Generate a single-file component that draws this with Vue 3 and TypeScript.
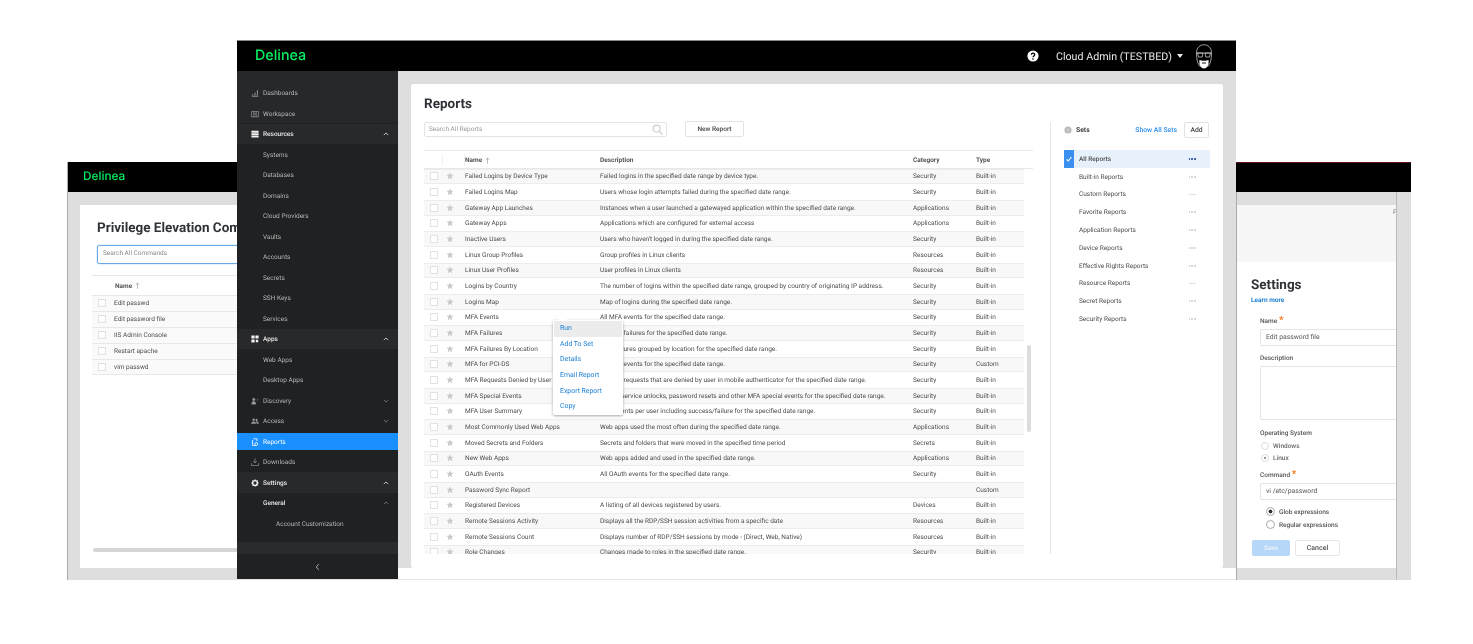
<script setup lang="ts">
interface Report { n: string; d: string; c: string; t: string }
const b = 'Built-in'
const reports: Report[] = [
  { n: 'Failed Logins by Device Type', d: 'Failed logins in the specified date range by device type.', c: 'Security', t: b },
  { n: 'Failed Logins Map', d: 'Users whose login attempts failed during the specified date range.', c: 'Security', t: b },
  { n: 'Gateway App Launches', d: 'Instances when a user launched a gatewayed application within the specified date range.', c: 'Applications', t: b },
  { n: 'Gateway Apps', d: 'Applications which are configured for external access', c: 'Applications', t: b },
  { n: 'Inactive Users', d: "Users who haven't logged in during the specified date range.", c: 'Security', t: b },
  { n: 'Linux Group Profiles', d: 'Group profiles in Linux clients', c: 'Resources', t: b },
  { n: 'Linux User Profiles', d: 'User profiles in Linux clients', c: 'Resources', t: b },
  { n: 'Logins by Country', d: 'The number of logins within the specified date range, grouped by country of originating IP address.', c: 'Security', t: b },
  { n: 'Logins Map', d: 'Map of logins during the specified date range.', c: 'Security', t: b },
  { n: 'MFA Events', d: 'All MFA events for the specified date range.', c: 'Security', t: b },
  { n: 'MFA Failures', d: 'All MFA failures for the specified date range.', c: 'Security', t: b },
  { n: 'MFA Failures By Location', d: 'MFA failures grouped by location for the specified date range.', c: 'Security', t: b },
  { n: 'MFA for PCI-DS', d: 'All MFA events for the specified date range.', c: 'Security', t: 'Custom' },
  { n: 'MFA Requests Denied by User', d: 'All MFA requests that are denied by user in mobile authenticator for the specified date range.', c: 'Security', t: b },
  { n: 'MFA Special Events', d: 'All self service unlocks, password resets and other MFA special events for the specified date range.', c: 'Security', t: b },
  { n: 'MFA User Summary', d: 'MFA events per user including success/failure for the specified date range.', c: 'Security', t: b },
  { n: 'Most Commonly Used Web Apps', d: 'Web apps used the most often during the specified date range.', c: 'Applications', t: b },
  { n: 'Moved Secrets and Folders', d: 'Secrets and folders that were moved in the specified time period', c: 'Secrets', t: b },
  { n: 'New Web Apps', d: 'Web apps added and used in the specified date range.', c: 'Applications', t: b },
  { n: 'OAuth Events', d: 'All OAuth events for the specified date range.', c: 'Security', t: b },
  { n: 'Password Sync Report', d: '', c: '', t: 'Custom' },
  { n: 'Registered Devices', d: 'A listing of all devices registered by users.', c: 'Devices', t: b },
  { n: 'Remote Sessions Activity', d: 'Displays all the RDP/SSH session activities from a specific date', c: 'Resources', t: b },
  { n: 'Remote Sessions Count', d: 'Displays number of RDP/SSH sessions by mode - (Direct, Web, Native)', c: 'Resources', t: b },
  { n: 'Role Changes', d: 'Changes made to roles in the specified date range.', c: 'Security', t: b },
]
interface NavItem { label: string; kind: 'top' | 'open' | 'sub' | 'group' | 'leaf' | 'active'; icon?: string; chev?: 'up' | 'down' }
const nav: NavItem[] = [
  { label: 'Dashboards', kind: 'top', icon: 'bars' },
  { label: 'Workspace', kind: 'top', icon: 'work' },
  { label: 'Resources', kind: 'open', icon: 'res', chev: 'up' },
  { label: 'Systems', kind: 'sub' }, { label: 'Databases', kind: 'sub' }, { label: 'Domains', kind: 'sub' },
  { label: 'Cloud Providers', kind: 'sub' }, { label: 'Vaults', kind: 'sub' }, { label: 'Accounts', kind: 'sub' },
  { label: 'Secrets', kind: 'sub' }, { label: 'SSH Keys', kind: 'sub' }, { label: 'Services', kind: 'sub' },
  { label: 'Apps', kind: 'open', icon: 'apps', chev: 'up' },
  { label: 'Web Apps', kind: 'sub' }, { label: 'Desktop Apps', kind: 'sub' },
  { label: 'Discovery', kind: 'top', icon: 'disc', chev: 'down' },
  { label: 'Access', kind: 'top', icon: 'access', chev: 'down' },
  { label: 'Reports', kind: 'active', icon: 'rep' },
  { label: 'Downloads', kind: 'top', icon: 'down' },
  { label: 'Settings', kind: 'open', icon: 'gear', chev: 'up' },
  { label: 'General', kind: 'group', chev: 'up' },
  { label: 'Account Customization', kind: 'leaf' },
]
const sets = ['All Reports', 'Built-in Reports', 'Custom Reports', 'Favorite Reports', 'Application Reports', 'Device Reports', 'Effective Rights Reports', 'Resource Reports', 'Secret Reports', 'Security Reports']
const menu = ['Run', 'Add To Set', 'Details', 'Email Report', 'Export Report', 'Copy']
const commands = ['Edit passwd', 'Edit password file', 'IIS Admin Console', 'Restart apache', 'vim passwd']
</script>

<template>
  <div class="desk">
    <!-- back window, left part -->
    <section class="win back">
      <header class="bar backbar"><span class="logo small">Delinea</span><i class="redline"></i></header>
      <div class="backbody">
        <div class="backcard">
          <h1 class="title">Privilege Elevation Commands</h1>
          <div class="cmdsearch">Search All Commands</div>
          <div class="cmdtable">
            <div class="cmdhead"><span class="headcell">Name</span><svg class="arrow" viewBox="0 0 6 8"><path d="M3 8V1M1 3l2-2 2 2" fill="none" stroke="#999" stroke-width=".8" /></svg></div>
            <div v-for="c in commands" :key="c" class="cmdrow"><i class="check"></i><span>{{ c }}</span></div>
          </div>
          <div class="hscroll"></div>
        </div>
      </div>
    </section>

    <!-- back window, right part -->
    <section class="win settings">
      <div class="setgray"></div>
      <div class="setlight"><span class="clip">Pr</span></div>
      <div class="setform">
        <h1 class="title settitle">Settings</h1>
        <a class="learn">Learn more</a>
        <div class="fields">
          <label class="lab">Name <b class="req">*</b></label>
          <div class="inp">Edit password file</div>
          <label class="lab">Description</label>
          <div class="inp area"></div>
          <label class="lab os">Operating System</label>
          <div class="radio"><i class="dot"></i>Windows</div>
          <div class="radio"><i class="dot on-soft"></i>Linux</div>
          <label class="lab cmd">Command <b class="req">*</b></label>
          <div class="inp">vi /etc/password</div>
          <div class="radio big first"><i class="dot lg on"></i>Glob expressions</div>
          <div class="radio big"><i class="dot lg"></i>Regular expressions</div>
        </div>
        <div class="btns"><span class="save">Save</span><span class="cancel">Cancel</span></div>
      </div>
    </section>
    <div class="rightstrip"></div>

    <!-- front window -->
    <section class="win front">
      <header class="bar frontbar">
        <span class="logo">Delinea</span>
        <div class="user">
          <svg class="help" viewBox="0 0 12 12"><circle cx="6" cy="6" r="5.6" fill="#fff" /><path d="M4.4 4.7c0-2.1 3.3-2.1 3.3-.1 0 1.300-1.700 1.300-1.700 2.700" fill="none" stroke="#000" stroke-width="1.300" /><circle cx="6" cy="9" r=".8" /></svg>
          <span class="uname">Cloud Admin (TESTBED)</span>
          <i class="caret"></i>
          <svg class="avatar" viewBox="0 0 18 26"><path d="M1.500 10C1.500-1 16.500-1 16.500 10c0 5-.5 9-3 13H4.500c-2.500-4-3-8-3-13z" fill="none" stroke="#ddd" stroke-width=".7" /><path d="M1.500 10h15" stroke="#ddd" stroke-width=".7" /><path d="M2.500 10h5.500l-.8 4H3.500zM10 10h5.500l-1 4h-3.700z" fill="none" stroke="#ddd" stroke-width=".7" /><path d="M4.500 17c2 1 7 1 9 0 .5 4-.5 8-4.500 8.500-4-.5-5-4.500-4.500-8.500z" fill="#fff" /><path d="M7 20h4" stroke="#000" stroke-width=".9" /></svg>
        </div>
      </header>
      <div class="frontbody">
        <aside class="side">
          <nav class="navlist">
            <div v-for="it in nav" :key="it.label" class="nav" :class="it.kind">
              <span v-if="it.icon" class="nicon">
                <svg viewBox="0 0 10 10">
                  <path v-if="it.icon === 'bars'" d="M1 9h8M2 8V6.500M5 8V4.500M8 8V1.500" stroke="currentColor" stroke-width="1.200" fill="none" />
                  <path v-else-if="it.icon === 'work'" d="M.5 2h9v6.500h-9zM3.500 2v6.500M6.500 2v6.500M3.500 5h3" stroke="currentColor" stroke-width=".9" fill="none" />
                  <path v-else-if="it.icon === 'res'" d="M.5 1h9v2.300h-9zM.5 4h9v2.300h-9zM.5 7h9v2.300h-9z" fill="currentColor" />
                  <path v-else-if="it.icon === 'apps'" d="M.5.5h4v4h-4zM5.500.5h4v4h-4zM.5 5.500h4v4h-4zM6 6h3v3H6z" fill="currentColor" />
                  <path v-else-if="it.icon === 'disc'" d="M3.500 1.500a1.600 1.600 0 1 1 0 3.200 1.600 1.600 0 0 1 0-3.200zM.8 9c0-2.800 1.200-3.500 2.700-3.500S6 6.400 6 9zM7 3h2.500M7 5h2" fill="currentColor" stroke="currentColor" stroke-width=".5" />
                  <path v-else-if="it.icon === 'access'" d="M3.300 2a1.500 1.500 0 1 1 0 3 1.500 1.500 0 0 1 0-3zM7 2.300a1.300 1.300 0 1 1 0 2.600 1.300 1.300 0 0 1 0-2.600zM.3 8.500c0-2 1.300-3 3-3s3 1 3 3zM7 8.500c0-1.200-.2-2-1-3 2-.4 3.700.6 3.700 3z" fill="currentColor" />
                  <path v-else-if="it.icon === 'rep'" d="M3 1h4.500v3M2 2.500v7h4M6.500 5.800a1.800 1.800 0 1 1 0 3.600 1.800 1.800 0 0 1 0-3.600z" stroke="currentColor" stroke-width="1" fill="none" />
                  <path v-else-if="it.icon === 'down'" d="M5 .5v5.500M2.800 4l2.200 2.200L7.200 4M.7 6.500v3h8.600v-3" stroke="currentColor" stroke-width=".9" fill="none" />
                  <g v-else-if="it.icon === 'gear'"><circle cx="5" cy="5" r="3" fill="none" stroke="currentColor" stroke-width="1.800" /><path d="M5 .3v2M5 7.700v2M.3 5h2M7.700 5h2M1.700 1.700l1.400 1.400M6.900 6.900l1.400 1.400M1.700 8.300l1.400-1.400M6.900 3.100l1.400-1.400" stroke="currentColor" stroke-width="1.100" /></g>
                </svg>
              </span>
              <span class="nlabel">{{ it.label }}</span>
              <svg v-if="it.chev" class="chev" viewBox="0 0 8 5"><path :d="it.chev === 'up' ? 'M1 4l3-3 3 3' : 'M1 1l3 3 3-3'" fill="none" stroke="currentColor" stroke-width="1" /></svg>
            </div>
            <div class="sidestrip"></div>
          </nav>
          <div class="collapse"><svg viewBox="0 0 6 10"><path d="M4.500 1.500L1.500 5l3 3.500" fill="none" stroke="#ccc" stroke-width="1" /></svg></div>
        </aside>
        <div class="mainwrap">
          <main class="card">
            <div class="left">
              <h1 class="title">Reports</h1>
              <div class="tools">
                <div class="search"><span>Search All Reports</span><svg viewBox="0 0 12 12"><circle cx="5" cy="5" r="3.800" fill="none" stroke="#ccc" stroke-width="1.200" /><path d="M8 8l3.500 3.500" stroke="#ccc" stroke-width="1.400" /></svg></div>
                <span class="newbtn">New Report</span>
              </div>
              <div class="table">
                <div class="thead">
                  <span class="cchk sep"></span><span class="cstar sep"></span>
                  <span class="cname hname">Name<svg class="arrow" viewBox="0 0 6 8"><path d="M3 8V1M1 3l2-2 2 2" fill="none" stroke="#999" stroke-width=".8" /></svg></span>
                  <span class="cdesc hname">Description</span><span class="ccat hname">Category</span><span class="ctype hname">Type</span>
                </div>
                <div class="tbody">
                  <div v-for="r in reports" :key="r.n" class="row">
                    <span class="cchk"><i class="check"></i></span>
                    <span class="cstar"><svg viewBox="0 0 10 10"><path d="M5 .5l1.350 3h3.150L7 5.700l.85 3.500L5 7.300 2.150 9.200 3 5.700.5 3.500h3.150z" fill="#c9c9c9" /></svg></span>
                    <span class="cname">{{ r.n }}</span><span class="cdesc">{{ r.d }}</span><span class="ccat">{{ r.c }}</span><span class="ctype">{{ r.t }}</span>
                  </div>
                </div>
                <div class="vscroll"></div>
                <div class="popup">
                  <i class="tip"></i>
                  <div v-for="(m, i) in menu" :key="m" class="pitem" :class="{ hot: i === 0 }">{{ m }}</div>
                </div>
              </div>
            </div>
            <div class="right">
              <div class="sethead">
                <svg class="setback" viewBox="0 0 10 10"><circle cx="5" cy="5" r="4.500" fill="#bbb" /><path d="M4 3l2 2-2 2" fill="none" stroke="#eee" stroke-width=".9" /></svg>
                <span class="setname">Sets</span>
                <a class="showall">Show All Sets</a>
                <span class="addbtn">Add</span>
              </div>
              <div class="setlist">
                <div v-for="(s, i) in sets" :key="s" class="setitem" :class="{ sel: i === 0 }">
                  <span class="flag"><svg v-if="i === 0" viewBox="0 0 10 10"><path d="M2 5.500l2 2 4-5" fill="none" stroke="#fff" stroke-width="1.400" /></svg></span>
                  <span class="setlabel">{{ s }}</span>
                  <span class="dots"><i></i><i></i><i></i></span>
                </div>
              </div>
            </div>
          </main>
        </div>
      </div>
    </section>
  </div>
</template>

<style scoped>
.desk { position: relative; width: 1473px; height: 644px; overflow: hidden; background: #fff; font-family: Roboto, "Liberation Sans", sans-serif; font-size: 6.5px; color: #4c4c4c; filter: blur(0.3px); text-rendering: geometricPrecision; }
.win { position: absolute; }
.bar { background: #000; display: flex; align-items: center; }
.logo { color: #06f060; font-family: Inter, Roboto, sans-serif; font-size: 14.300px; font-weight: 500; position: relative; top: -1px; }
.logo.small { font-size: 11.800px; margin-left: 15px; }
.title { margin: 0; font-size: 13.500px; font-weight: 700; color: #2f3338; line-height: 16px; white-space: nowrap; }
.check { display: block; width: 8px; height: 8px; border: 1px solid #e2e2e2; background: #fff; box-sizing: border-box; }

.back { left: 67px; top: 162px; width: 1344px; height: 418px; border-left: 1px solid #aaa; box-sizing: border-box; }
.backbar { height: 30px; position: relative; }
.redline { position: absolute; right: 0; top: 0; width: 175px; height: 1px; background: #5c1518; }
.backbody { height: 388px; background: #dedede; padding: 13px 0 12px 12px; box-sizing: border-box; }
.backcard { position: relative; width: 400px; height: 363px; background: #fff; padding: 15px 17px 14px; box-sizing: border-box; }
.cmdsearch { margin-top: 9px; height: 17px; border: 1px solid #6aaae6; box-shadow: 0 0 2px #a8cff2; border-radius: 2px; padding-left: 5px; line-height: 15px; color: #888; }
.cmdtable { margin: 11px 0 0 -5px; border-top: 1px solid #e8e8e8; }
.cmdhead { display: flex; align-items: center; height: 19px; padding-left: 23px; border-bottom: 1px solid #e8e8e8; gap: 3px; }
.headcell { font-weight: 700; color: #555; }
.arrow { width: 5px; height: 7px; }
.cmdrow { display: flex; align-items: center; height: 15.900px; box-sizing: border-box; border-bottom: 1px solid #e8e8e8; padding-left: 6px; gap: 8px; background: #fafafa; }
.hscroll { position: absolute; left: 13px; top: 343px; width: 200px; height: 4px; border-radius: 2px; background: #d6d6d6; }

.settings { left: 1236px; top: 192px; width: 161px; height: 388px; background: #fff; overflow: hidden; border-left: 1px solid #aaa; box-sizing: border-box; }
.setgray { height: 13px; background: #dedede; }
.setlight { height: 57px; background: #f7f7f7; position: relative; }
.clip { position: absolute; left: 156px; top: 3px; color: #777; }
.setform { padding: 14.500px 0 0 14px; }
.settitle { line-height: 16px; }
.learn { display: block; color: #1a7fd4; font-weight: 700; font-size: 6.500px; margin-top: 3.500px; line-height: 8px; }
.fields { margin: 13px 0 0 9px; }
.lab { display: block; line-height: 8px; color: #555; font-weight: 500; font-size: 6.500px; }
.req { color: #f47a20; font-size: 10px; line-height: 8px; }
.inp { width: 200px; height: 17px; box-sizing: border-box; border: 1px solid #e4e4e4; border-radius: 2px; margin: 4px 0 8px; padding-left: 5px; line-height: 15px; color: #555; font-size: 6.800px; }
.area { height: 54px; margin-bottom: 9px; }
.os { margin-bottom: 3px; }
.radio { display: flex; align-items: center; gap: 4px; height: 12px; padding-left: 1px; font-weight: 500; color: #666; }
.dot { display: block; width: 8px; height: 8px; border: 1px solid #ddd; border-radius: 50%; box-sizing: border-box; background: #fff; }
.on-soft { background: radial-gradient(circle, #999 0 1.200px, #fff 1.500px); }
.cmd { margin-top: 7px; }
.radio.big { padding-left: 6px; height: 13px; color: #555; }
.radio.first { margin-top: -3px; }
.dot.lg { width: 9px; height: 9px; border-color: #aaa; }
.dot.on { background: radial-gradient(circle, #333 0 1.800px, #fff 2.200px); }
.btns { display: flex; gap: 5px; margin-top: 9px; margin-left: 1px; }
.save { width: 38px; height: 16px; background: #b7d7f8; border-radius: 2px; color: #e8f2fc; font-weight: 700; text-align: center; line-height: 16px; }
.cancel { width: 45px; height: 16px; border: 1px solid #e6e6e6; border-radius: 2px; box-sizing: border-box; text-align: center; line-height: 14px; color: #555; font-weight: 500; font-size: 7px; }
.settings::after { content: ""; position: absolute; left: 0; right: 0; bottom: 0; height: 12px; background: #dedede; }
.settings::before { content: ""; position: absolute; top: 0; bottom: 0; right: 0; width: 1px; background: #bbb; z-index: 2; }
.rightstrip { position: absolute; left: 1397px; top: 192px; width: 14px; height: 388px; background: #dedede; }

.front { left: 237px; top: 40px; width: 999px; height: 540px; border-top: 1px solid #888; box-sizing: border-box; }
.frontbar { height: 30px; padding-left: 18px; justify-content: space-between; }
.user { display: flex; align-items: center; }
.help { width: 12px; height: 12px; margin-right: 17px; }
.uname { color: #e8e8e8; font-size: 10.700px; }
.caret { width: 0; height: 0; border: 3.500px solid transparent; border-top: 4px solid #e8e8e8; border-bottom: 0; margin-left: 5px; }
.avatar { width: 18px; height: 26px; margin: 0 23px 0 12px; }
.frontbody { display: flex; height: 509px; background: #fff; border-bottom: 1px solid #e4e4e4; box-sizing: border-box; }
.side { width: 161px; background: #1f2122; display: flex; flex-direction: column; flex-shrink: 0; }
.navlist { position: relative; height: 483px; overflow: hidden; padding-top: 11.750px; box-sizing: border-box; flex-shrink: 0; background: linear-gradient(#26282a 0 52px, #1f2122 52px); }
.nav { display: flex; align-items: center; height: 20.500px; box-sizing: border-box; padding-left: 14px; color: #b5b5b5; }
.nicon { width: 8px; height: 8px; margin-right: 4px; flex-shrink: 0; color: #9a9a9a; display: block; }
.nicon svg { display: block; width: 8px; height: 8px; }
.nlabel { flex: 1; }
.chev { width: 6px; height: 4px; margin-right: 9px; color: #888; }
.open { background: #28292b; color: #e6e6e6; font-weight: 500; }
.open .nicon, .open .chev { color: #f2f2f2; }
.sub .nlabel { padding-left: 12px; }
.group .nlabel { padding-left: 12px; color: #e6e6e6; font-weight: 500; }
.leaf .nlabel { padding-left: 25px; }
.active { background: #1a90ff; background-clip: padding-box; border-block: 2px solid transparent; color: #fff; }
.active .nicon { color: #fff; }
.sidestrip { position: absolute; left: 0; right: 0; top: 471px; height: 12px; background: #292b2d; }
.collapse { flex: 1; display: flex; align-items: center; justify-content: center; }
.collapse svg { width: 5px; height: 8px; margin-left: -1px; }
.mainwrap { flex: 1; min-width: 0; height: 497px; background: #dedede; padding: 13px 13px 0; box-sizing: border-box; }
.card { background: #fff; height: 484px; display: flex; overflow: hidden; box-sizing: border-box; padding: 12px 0 0 13px; border-radius: 2px; }
.left { width: 609px; flex-shrink: 0; }
.tools { display: flex; align-items: center; margin-top: 9px; gap: 18px; height: 16px; }
.search { width: 243px; height: 15px; box-sizing: border-box; border: 1px solid #e4e4e4; border-radius: 2px; padding: 0 3px 0 4px; color: #999; display: flex; align-items: center; justify-content: space-between; }
.search svg { width: 11px; height: 11px; }
.newbtn { width: 59px; height: 16px; box-sizing: border-box; border: 1px solid #e2e2e2; border-radius: 2px; text-align: center; line-height: 14px; color: #444; font-weight: 500; }
.table { position: relative; margin-top: 13px; }
.thead { display: flex; align-items: center; height: 18.500px; padding-top: 1.500px; box-sizing: border-box; border-top: 1px solid #e8e8e8; border-bottom: 1px solid #e8e8e8; }
.hname { font-weight: 700; color: #555; display: flex; gap: 3px; align-items: center; }
.sep { height: 12px; border-right: 1px solid #f0f0f0; box-sizing: border-box; }
.tbody { height: 385.500px; overflow: hidden; }
.row { display: flex; align-items: center; height: 15.680px; width: 600px; box-sizing: border-box; white-space: nowrap; }
.row:nth-child(odd) { background: #f8f8f8; box-shadow: inset 0 -1px #ececec, inset 0 1px #ececec; }
.cchk { width: 19px; padding-left: 6px; box-sizing: border-box; flex-shrink: 0; }
.cstar { width: 22px; padding-left: 3px; box-sizing: border-box; flex-shrink: 0; display: block; }
.cstar svg { display: block; width: 8px; height: 8px; }
.row .cstar { height: 8px; }
.cname { width: 135px; flex-shrink: 0; padding-left: 0; }
.cdesc { width: 313px; flex-shrink: 0; }
.ccat { width: 63px; flex-shrink: 0; }
.ctype { width: 48px; flex-shrink: 0; }
.vscroll { position: absolute; left: 603px; top: 195px; width: 4px; height: 87px; background: #dcdcdc; border-radius: 2px; }
.popup { position: absolute; left: 129px; top: 170px; width: 70px; height: 95px; background: #fff; box-shadow: 0 1px 3px rgba(0,0,0,.35); border-radius: 2px; padding-top: 1px; box-sizing: border-box; }
.tip { position: absolute; left: 7px; top: -3px; width: 6px; height: 6px; background: #fff; transform: rotate(45deg); }
.pitem { position: relative; height: 15.680px; line-height: 15.680px; padding-left: 6px; margin: 0 1px; color: #1a7fd4; font-size: 6.900px; }
.hot { background: #ececec; }
.right { margin-left: 17px; width: 159px; border-left: 1px solid #e6e6e6; height: 432px; margin-top: 26px; box-sizing: border-box; padding-left: 13px; }
.sethead { display: flex; align-items: center; height: 16px; }
.setback { width: 8px; height: 8px; margin-right: 4px; }
.setname { font-weight: 700; color: #444; flex: 1; font-size: 6.800px; }
.showall { color: #2a8fe8; font-weight: 500; margin-right: 7px; font-size: 6.800px; }
.addbtn { width: 25px; height: 16px; box-sizing: border-box; border: 1px solid #e2e2e2; border-radius: 2px; text-align: center; line-height: 14px; color: #444; font-weight: 500; font-size: 6.800px; }
.setlist { margin-top: 12px; width: 146px; margin-left: 0; }
.setitem { display: flex; align-items: center; height: 17.800px; }
.flag { width: 10px; height: 100%; flex-shrink: 0; margin-right: 5px; display: flex; align-items: center; justify-content: center; }
.flag svg { width: 8px; height: 8px; }
.sel { background: #e7f1fc; }
.sel .flag { background: #3a8fef; }
.sel .setlabel { font-weight: 500; }
.setlabel { flex: 1; }
.dots { display: flex; gap: 1px; margin-right: 14px; }
.dots i { display: block; width: 1.800px; height: 1.800px; border-radius: 50%; background: #ccc; }
.sel .dots i { background: #1d3c8f; }
</style>
